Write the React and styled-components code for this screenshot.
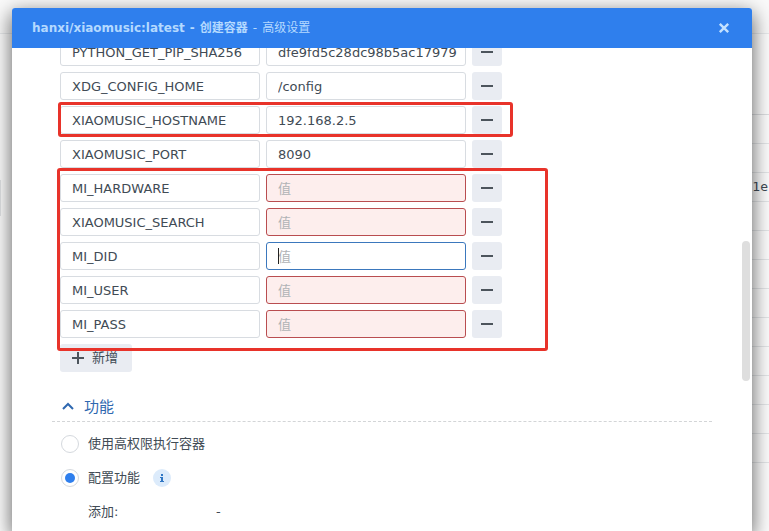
import React, { useState } from "react";
import styled, { createGlobalStyle, css } from "styled-components";

const GlobalStyle = createGlobalStyle`
  * { box-sizing: border-box; }
  body {
    margin: 0;
    overflow: hidden;
    background: #fdfdfd;
    color: #414b55;
    font: 13px/20px "DejaVu Sans", "Noto Sans CJK SC", sans-serif;
  }
  button, input { font: inherit; color: inherit; }
`;

const Page = styled.div`
  position: relative;
  height: 100vh;
  overflow: hidden;
`;

const TopBar = styled.div`
  height: 34px;
  background: #fafafa;
  border-bottom: 1px solid #e8eaec;
`;

const Background = styled.div`
  display: flex;
  align-items: flex-start;
`;

const SideHandle = styled.div`
  width: 1px;
  height: 36px;
  margin-top: 146px;
  background: #e2e4e6;
`;

const BackTable = styled.table`
  flex: 1;
  margin: 80px 0 0 199px;
  border-collapse: collapse;
  border-top: 1px solid #dcdee0;
  font: 13px/20px "DejaVu Sans Mono", monospace;
`;

const BackCell = styled.td`
  height: 29px;
  padding: 0 1px;
  text-align: right;
  border-bottom: 1px solid #e4e6e8;
`;

const Overlay = styled.div`
  position: absolute;
  inset: 0;
  display: flex;
  padding: 8px 17px 0 12px;
`;

const Dialog = styled.section`
  flex: 1;
  min-width: 0;
  display: flex;
  flex-direction: column;
  background: #fff;
  border-radius: 3px 3px 0 0;
  box-shadow: 0 6px 20px 1px rgba(0, 0, 0, 0.6);
`;

const TitleBar = styled.header`
  flex: none;
  display: flex;
  align-items: center;
  justify-content: space-between;
  height: 40px;
  padding: 0 22px 0 20px;
  border-radius: 3px 3px 0 0;
  background: #2f7fed;
  color: #b4d9ff;
`;

const Title = styled.h1`
  display: flex;
  gap: 5px;
  margin: 0;
  font-size: 12px;
  line-height: 20px;
`;

const TitleDetail = styled.span`
  font-weight: 400;
`;

const IconButton = styled.button`
  display: grid;
  place-items: center;
  width: 12px;
  height: 12px;
  padding: 0;
  border: 0;
  background: none;
  cursor: pointer;
`;

const Body = styled.div`
  position: relative;
  flex: 1;
  min-height: 0;
  overflow: hidden;
`;

const ScrollThumb = styled.div`
  position: absolute;
  top: 40%;
  right: 2px;
  width: 8px;
  height: 29%;
  border-radius: 4px;
  background: #dedede;
`;

const Content = styled.div`
  margin: -10px 40px 0;
`;

const Variables = styled.div`
  display: flex;
  flex-direction: column;
  align-items: flex-start;
  gap: 6px;
  padding: 0 8px;
`;

const Group = styled.div`
  position: relative;
  display: flex;
  flex-direction: column;
  gap: 6px;
`;

const Highlight = styled.div`
  position: absolute;
  z-index: 1;
  inset: ${(p) => (p.$wide ? "-6px -46px -13px -3px" : "-4px -11px -3px -2px")};
  border: 3px solid #e8332a;
  border-radius: 3px;
  pointer-events: none;
`;

const Row = styled.div`
  display: grid;
  grid-template-columns: 200px 200px 30px;
  gap: 6px;
`;

const Field = styled.div`
  position: relative;
  display: flex;
`;

const TextInput = styled.input`
  width: 100%;
  height: 28px;
  padding: 0 8px 0 11px;
  border: 1px solid #d8dce1;
  border-radius: 3px;
  background: #fff;
  outline: none;
  &::placeholder { color: #b0b3b6; opacity: 1; }
  ${(p) => p.$state === "error" && css`
    border-color: #b94d50;
    background: #fdeeed;
  `}
  ${(p) => p.$state === "active" && css`
    border-color: #3b78bd;
  `}
`;

const Caret = styled.span`
  position: absolute;
  left: 12px;
  top: 6px;
  width: 1px;
  height: 16px;
  background: #222;
`;

const SoftButton = styled.button`
  display: flex;
  align-items: center;
  justify-content: center;
  gap: 8px;
  height: 28px;
  padding: ${(p) => (p.$label ? "0 14px 0 12px" : "0")};
  border: 0;
  border-radius: 3px;
  background: #e9ecf2;
  cursor: pointer;
`;

const SectionHeader = styled.h2`
  margin: 24px 0 0;
  padding: 0 8px 4px;
  border-bottom: 1px dashed #d3d5d7;
  font-size: 15px;
  line-height: 20px;
  font-weight: 400;
`;

const SectionToggle = styled.button`
  display: flex;
  align-items: center;
  gap: 8px;
  height: 21px;
  padding: 0;
  border: 0;
  background: none;
  color: #2f68b0;
  cursor: pointer;
`;

const Options = styled.div`
  padding: 5px 8px;
`;

const OptionRow = styled.div`
  display: flex;
  align-items: center;
  gap: 13px;
  height: 34px;
`;

const OptionLabel = styled.label`
  display: flex;
  align-items: center;
  gap: 9px;
`;

const Radio = styled.input`
  appearance: none;
  display: grid;
  place-items: center;
  width: 18px;
  height: 18px;
  margin: 0 0 0 1px;
  border: 1px solid #d5d9de;
  border-radius: 50%;
  background: #fff;
  &:checked::before {
    content: "";
    width: 10px;
    height: 10px;
    border-radius: 50%;
    background: #2f7fed;
  }
`;

const InfoButton = styled(IconButton)`
  width: 18px;
  height: 18px;
  border-radius: 50%;
  background: #dcebfb;
  color: #2f76c4;
`;

const Detail = styled.dl`
  display: grid;
  grid-template-columns: 128px 1fr;
  align-items: center;
  height: 34px;
  margin: 0;
  padding-left: 28px;
`;

const DetailText = styled.span`
  margin: 0;
`;

const Minus = () => (
  <svg width="12" height="2" viewBox="0 0 12 2" aria-hidden="true">
    <rect width="12" height="2" fill="#4c545c" />
  </svg>
);

const Plus = () => (
  <svg width="12" height="12" viewBox="0 0 12 12" aria-hidden="true">
    <path d="M6 0v12M0 6h12" stroke="#4c545c" strokeWidth="2" />
  </svg>
);

const Close = () => (
  <svg width="12" height="12" viewBox="0 0 12 12" aria-hidden="true">
    <path d="M1.8 1.8l8.400 8.400M10.200 1.800l-8.400 8.400" stroke="#c3e1ff" strokeWidth="2.400" />
  </svg>
);

const Chevron = () => (
  <svg width="16" height="12" viewBox="0 0 16 12" aria-hidden="true">
    <path d="M3 8l5-5 5 5" fill="none" stroke="currentColor" strokeWidth="2" />
  </svg>
);

const Info = () => (
  <svg width="6" height="8" viewBox="0 0 6 8" aria-hidden="true">
    <path d="M2 0h2v2H2zM1 3h3v4h1v1H1V7h1V4H1z" fill="currentColor" />
  </svg>
);

const leading = [
  { key: "PYTHON_GET_PIP_SHA256", value: "dfe9fd5c28dc98b5ac17979" },
  { key: "XDG_CONFIG_HOME", value: "/config" },
];
const hostname = [{ key: "XIAOMUSIC_HOSTNAME", value: "192.168.2.5" }];
const port = [{ key: "XIAOMUSIC_PORT", value: "8090" }];
const pending = [
  { key: "MI_HARDWARE", state: "error" },
  { key: "XIAOMUSIC_SEARCH", state: "error" },
  { key: "MI_DID", state: "active" },
  { key: "MI_USER", state: "error" },
  { key: "MI_PASS", state: "error" },
];

function VariableRows({ items }) {
  return items.map((item) => (
    <Row key={item.key}>
      <TextInput aria-label="变量" defaultValue={item.key} />
      <Field>
        <TextInput
          aria-label={item.key}
          placeholder="值"
          defaultValue={item.value}
          $state={item.state}
        />
        {item.state === "active" && <Caret />}
      </Field>
      <SoftButton type="button" aria-label="删除"><Minus /></SoftButton>
    </Row>
  ));
}

export default function App() {
  const [mode, setMode] = useState("custom");
  return (
    <Page>
      <GlobalStyle />
      <TopBar />
      <Background>
        <SideHandle />
        <BackTable>
          <tbody>
            {Array.from({ length: 12 }, (_, i) => (
              <tr key={i}><BackCell>{i === 2 ? "1e" : ""}</BackCell></tr>
            ))}
          </tbody>
        </BackTable>
      </Background>
      <Overlay>
        <Dialog role="dialog" aria-labelledby="dialog-title">
          <TitleBar>
            <Title id="dialog-title">
              <span>hanxi/xiaomusic:latest</span>
              <span>-</span>
              <span>创建容器</span>
              <TitleDetail>-</TitleDetail>
              <TitleDetail>高级设置</TitleDetail>
            </Title>
            <IconButton type="button" aria-label="关闭"><Close /></IconButton>
          </TitleBar>
          <Body>
            <Content>
              <Variables>
                <Group><VariableRows items={leading} /></Group>
                <Group>
                  <VariableRows items={hostname} />
                  <Highlight />
                </Group>
                <Group><VariableRows items={port} /></Group>
                <Group>
                  <VariableRows items={pending} />
                  <Highlight $wide />
                </Group>
                <SoftButton type="button" $label><Plus />新增</SoftButton>
              </Variables>
              <SectionHeader>
                <SectionToggle type="button" aria-expanded="true"><Chevron />功能</SectionToggle>
              </SectionHeader>
              <Options>
                <OptionRow>
                  <OptionLabel>
                    <Radio type="radio" name="mode" checked={mode === "privileged"} onChange={() => setMode("privileged")} />
                    使用高权限执行容器
                  </OptionLabel>
                </OptionRow>
                <OptionRow>
                  <OptionLabel>
                    <Radio type="radio" name="mode" checked={mode === "custom"} onChange={() => setMode("custom")} />
                    配置功能
                  </OptionLabel>
                  <InfoButton type="button" aria-label="说明"><Info /></InfoButton>
                </OptionRow>
                <Detail>
                  <DetailText as="dt">添加:</DetailText>
                  <DetailText as="dd">-</DetailText>
                </Detail>
              </Options>
            </Content>
            <ScrollThumb />
          </Body>
        </Dialog>
      </Overlay>
    </Page>
  );
}
